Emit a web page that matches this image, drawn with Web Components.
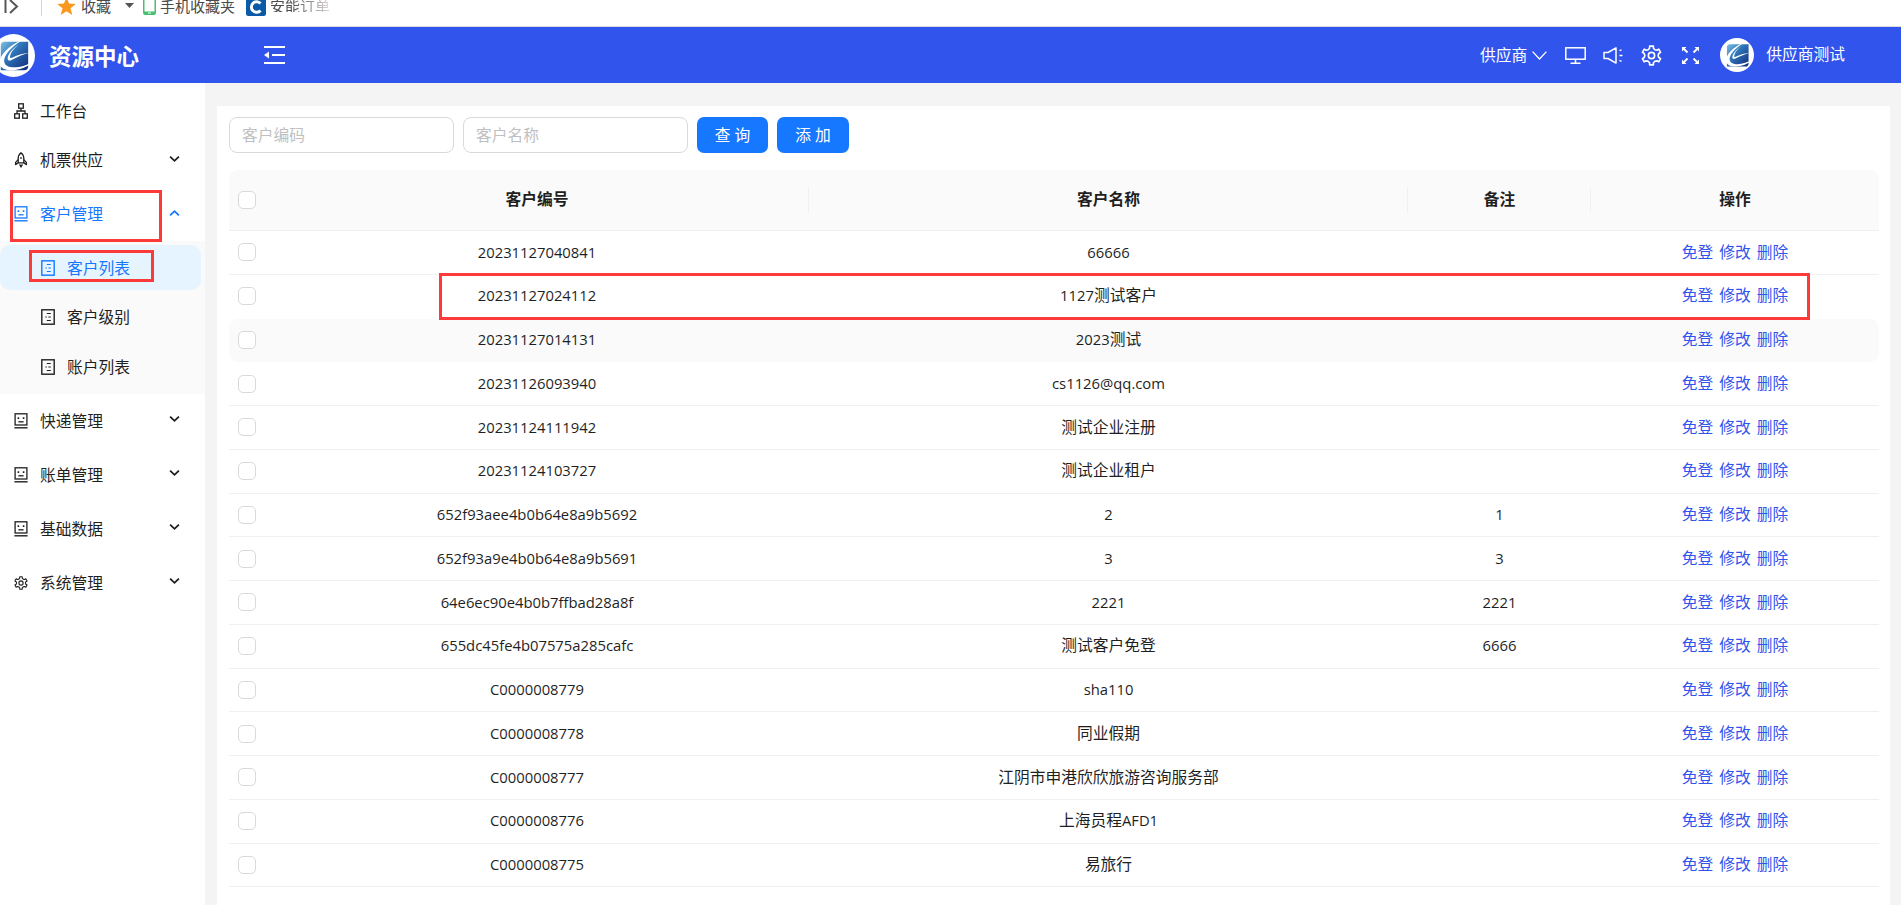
<!DOCTYPE html>
<html lang="zh-CN">
<head>
<meta charset="utf-8">
<title>资源中心</title>
<style>
  html, body { margin: 0; height: 100%; overflow: hidden; background: #f4f4f4; }
  body { font-family: "Noto Sans CJK SC", "Open Sans", sans-serif; font-size: 15.75px; color: #1f1f1f; }
  menu-item[first] { margin-bottom: 4px; }
  menu-item[tight] { margin-bottom: 4.5px; }
  menu-item[sub]:last-child { margin-bottom: 0; }
</style>
</head>
<body>
<app-shell>
  <browser-strip slot="strip"></browser-strip>
  <app-header slot="header"></app-header>
  <side-menu slot="side">
    <menu-item first icon="apartment">工作台</menu-item>
    <menu-item icon="rocket" arrow="down">机票供应</menu-item>
    <menu-item tight icon="face" arrow="up" active>客户管理</menu-item>
    <menu-group>
      <menu-item sub tight icon="list" current>客户列表</menu-item>
      <menu-item sub tight icon="list">客户级别</menu-item>
      <menu-item sub icon="list">账户列表</menu-item>
    </menu-group>
    <menu-item icon="face" arrow="down">快递管理</menu-item>
    <menu-item icon="face" arrow="down">账单管理</menu-item>
    <menu-item icon="face" arrow="down">基础数据</menu-item>
    <menu-item icon="gear" arrow="down">系统管理</menu-item>
  </side-menu>
  <list-card slot="main">
    <filter-bar></filter-bar>
    <data-table></data-table>
  </list-card>
  <red-mark style="left:10px;top:190px;width:152px;height:52px"></red-mark>
  <red-mark style="left:29px;top:250px;width:125px;height:32px"></red-mark>
  <red-mark style="left:439px;top:273px;width:1371px;height:47px"></red-mark>
</app-shell>

<script>
// gear with six lobes, same shape as the reference
function gearPath() {
  let d = '';
  for (let i = 0; i < 6; i++) {
    const a = i * 60 - 90;
    [[-30, 7.6], [-15, 8.6], [-11, 11], [11, 11], [15, 8.6]].forEach(([o, r]) => {
      const t = (a + o) * Math.PI / 180;
      const x = (12 + r * Math.cos(t)).toFixed(2);
      const y = (12 + r * Math.sin(t)).toFixed(2);
      d += (d ? 'L' : 'M') + x + ' ' + y;
    });
  }
  return d + 'Z';
}

function logoSvg(id) {
  return `<svg viewBox="0 0 44 44"><defs><linearGradient id="${id}" x1="0" y1="0" x2="1" y2="1"><stop offset="0" stop-color="#7fc0e2"/><stop offset=".4" stop-color="#2f78bb"/><stop offset="1" stop-color="#14297a"/></linearGradient></defs><circle cx="22" cy="22" r="22" fill="#fff"/><path d="M9 12Q9 8 13 8H37V33Q37 37 33 37H9Z" fill="url(#${id})"/><path d="M33 5C22 9 10 18 8 27c-1 6 3 10 11 10 8 0 18-3 25-10-8 5-17 7.500-23 7-6-.5-9-3-8.500-8C13.500 19 24 10 33 5z" fill="#fff"/><path d="M27 11C21 15 16 21 16 25c0 2.500 2 2.500 4 1.500 6-3 13-6 19-7.500-6 .5-13 2.500-18 5-2 1-3 .5-2.500-1.500 1-4 4-8 8.500-11.500z" fill="#fff"/></svg>`;
}

const ICONS = {
  apartment: `<svg viewBox="0 0 14 16" fill="none" stroke="currentColor" stroke-width="1.3"><rect x="4.7" y=".8" width="4.6" height="4.4"/><rect x=".7" y="10.8" width="4.6" height="4.4"/><rect x="8.7" y="10.8" width="4.6" height="4.4"/><path d="M7 5.200V8M3 10.800V8h8v2.800"/></svg>`,
  rocket: `<svg viewBox="0 0 14 16" fill="none" stroke="currentColor" stroke-width="1.3" stroke-linejoin="round"><path d="M7 .8C5 2.400 4.200 4.600 4.200 6.600v4.200h5.600V6.600C9.800 4.600 9 2.400 7 .8z"/><path d="M4.200 7.600 1.600 10.400v2.200l2.600-1.800M9.800 7.600l2.600 2.800v2.200l-2.600-1.800M5.600 12.400 7 15l1.400-2.600"/><path d="M6.200 6h1.600" stroke-width="1.400"/></svg>`,
  face: `<svg viewBox="0 0 14 16" fill="none" stroke="currentColor" stroke-width="1.3"><rect x="1.100" y=".8" width="11.800" height="11.200"/><path d="M.4 14.800h13.200" stroke-width="1.400"/><path d="M4.400 4.200v1.800M9.600 4.200v1.800" stroke-width="1.600"/><path d="M4.400 8.800h5.200"/></svg>`,
  list: `<svg viewBox="0 0 14 16" fill="none" stroke="currentColor" stroke-width="1.400"><rect x=".8" y=".8" width="12.400" height="14.400"/><path d="M5.800 4.500h4M7.400 8h2.400M5.800 11.500h4" stroke-width="1.200"/><path d="M4.400 8h1.400" stroke-width="1.200"/></svg>`,
  gear: `<svg viewBox="0 0 24 24" fill="none" stroke="currentColor" stroke-width="1.900" stroke-linejoin="round"><path d="${gearPath()}"/><circle cx="12" cy="12" r="3.600"/></svg>`,
  chevron: `<svg viewBox="0 0 12 8" fill="none" stroke="currentColor" stroke-width="2"><path d="M1.200 1.400 6 6l4.800-4.600"/></svg>`
};

class AppShell extends HTMLElement {
  connectedCallback() {
    this.attachShadow({ mode: 'open' });
    this.shadowRoot.innerHTML = `
      <style>
        :host { display: grid; grid-template-columns: 205px 1fr; grid-template-rows: 27px 56px 1fr; height: 905px; position: relative; }
        ::slotted([slot="strip"]), ::slotted([slot="header"]) { grid-column: 1 / 3; }
      </style>
      <slot name="strip"></slot>
      <slot name="header"></slot>
      <slot name="side"></slot>
      <slot name="main"></slot>
      <slot></slot>
    `;
  }
}

class BrowserStrip extends HTMLElement {
  connectedCallback() {
    this.attachShadow({ mode: 'open' });
    this.shadowRoot.innerHTML = `
      <style>
        :host { display: flex; align-items: flex-start; height: 26px; background: #fff; border-bottom: 1px solid #dcdcdc; overflow: hidden; color: #4a4a4a; font-size: 15px; position: relative; }
        svg { flex: none; display: block; }
        span { line-height: 12px; white-space: nowrap; }
        .fade { background: linear-gradient(90deg, #4a4a4a 35%, #e4dcdc 100%); -webkit-background-clip: text; background-clip: text; color: transparent; }
      </style>
      <svg style="margin-left:4px" width="15" height="14" viewBox="0 0 15 14" fill="none" stroke="#555" stroke-width="2"><path d="M1.500 0v13"/><path d="M6 0l7 6.500L6 13"/></svg>
      <svg style="margin-left:22px" width="1" height="16"><rect width="1" height="16" fill="#d4d4d4"/></svg>
      <svg style="margin-left:15px" width="19" height="15" viewBox="0 0 19 15"><path d="M9.500-3 12 3.600 18.800 4 13.500 8.200 15.300 15 9.500 11.200 3.700 15 5.500 8.200.2 4 7 3.600z" fill="#f8981d"/></svg>
      <span style="margin-left:5px;width:31px">收藏</span>
      <svg style="margin-left:13px;margin-top:3px" width="9" height="5" viewBox="0 0 9 5"><path d="M0 0h9L4.500 5z" fill="#555"/></svg>
      <svg style="margin-left:9px" width="13" height="15" viewBox="0 0 13 15"><path d="M0-1h13v13q0 3-2 3H2q-2 0-2-3z" fill="#45c070"/><rect x="1.500" y="-1" width="10" height="12.500" fill="#fff"/><rect x="5" y="12.500" width="3" height="1" fill="#fff"/></svg>
      <span style="margin-left:4px">手机收藏夹</span>
      <svg style="margin-left:11px" width="20" height="16" viewBox="0 0 20 16"><rect y="-4" width="20" height="20" rx="2.500" fill="#0b5aa8"/><path d="M14.500 3.600A5.200 5.200 0 1 0 14.500 10.400" fill="none" stroke="#fff" stroke-width="3"/></svg>
      <span class="fade" style="margin-left:4px">安能订单</span>
    `;
  }
}

class AppHeader extends HTMLElement {
  connectedCallback() {
    this.attachShadow({ mode: 'open' });
    this.shadowRoot.innerHTML = `
      <style>
        :host { display: flex; align-items: center; height: 56px; background: #3155ec; color: #fff; overflow: hidden; }
        svg { display: block; flex: none; }
        .logo { width: 43px; height: 43px; margin-left: -8px; }
        .title { margin-left: 14px; font-size: 22.5px; font-weight: 700; line-height: 1; white-space: nowrap; }
        .collapse { margin-left: 125px; }
        .right { margin-left: auto; margin-right: 56px; display: flex; align-items: center; }
        .role { line-height: 1; }
        .right .mini { width: 34px; height: 34px; margin-left: 21px; }
        .who { margin-left: 12px; line-height: 1; font-size: 15.75px; margin-top: -3px; }
      </style>
      <div class="logo">${logoSvg('lg1')}</div>
      <div class="title">资源中心</div>
      <svg class="collapse" width="21" height="18" viewBox="0 0 21 18" fill="none" stroke="#fff" stroke-width="2"><path d="M0 1h21M8 9h13M0 17h21"/><path d="M5 5.500v7L0 9z" fill="#fff" stroke="none"/></svg>
      <div class="right">
        <span class="role">供应商</span>
        <svg style="margin-left:5px" width="15" height="9" viewBox="0 0 15 9" fill="none" stroke="#fff" stroke-width="1.300"><path d="M.6.600 7.500 8 14.400.6"/></svg>
        <svg style="margin-left:18px" width="21" height="17" viewBox="0 0 21 17" fill="none" stroke="#fff" stroke-width="1.500"><rect x=".8" y=".8" width="19.400" height="11.400"/><path d="M10.500 12.200v3.800M5.500 16.200h10"/></svg>
        <svg style="margin-left:17px" width="20" height="17" viewBox="0 0 20 17" fill="none" stroke="#fff" stroke-width="1.500" stroke-linejoin="round"><path d="M1 5.500h4L13 .9v15.200L5 11.500H1z"/><path d="M16.500 3.600 18.500 2.800M16.500 8.500h3M16.500 13.400l2 .9" stroke-width="1.400"/></svg>
        <div style="margin-left:18px;width:21px;height:21px">${ICONS.gear}</div>
        <svg style="margin-left:20px" width="17" height="17" viewBox="0 0 17 17" fill="none" stroke="#fff" stroke-width="1.800"><path d="M1 1l4.500 4.500M16 1l-4.500 4.500M1 16l4.500-4.500M16 16l-4.500-4.500"/><path d="M0 0h4.500L0 4.500zM17 0v4.500L12.500 0zM0 17v-4.500L4.500 17zM17 17h-4.500L17 12.500z" fill="#fff" stroke="none"/></svg>
        <div class="mini">${logoSvg('lg2')}</div>
        <span class="who">供应商测试</span>
      </div>
    `;
  }
}

class SideMenu extends HTMLElement {
  connectedCallback() {
    this.attachShadow({ mode: 'open' });
    this.shadowRoot.innerHTML = `
      <style>
        :host { display: flex; flex-direction: column; background: #fff; padding-top: 5.5px; box-sizing: border-box; min-height: 0; }
      </style>
      <slot></slot>
    `;
  }
}

class MenuGroup extends HTMLElement {
  connectedCallback() {
    this.attachShadow({ mode: 'open' });
    this.shadowRoot.innerHTML = `
      <style>
        :host { display: flex; flex-direction: column; background: #fafafa; padding: 4px 0 4.5px; margin-bottom: 4.5px; }
      </style>
      <slot></slot>
    `;
  }
}

class MenuItem extends HTMLElement {
  connectedCallback() {
    const arrow = this.getAttribute('arrow');
    this.attachShadow({ mode: 'open' });
    this.shadowRoot.innerHTML = `
      <style>
        :host { display: flex; align-items: center; height: 45px; margin-bottom: 9px; padding: 0 25px 0 14px; font-size: 15.75px; color: #1f1f1f; flex: none; }
        :host([active]) { color: #1677ff; }
        :host([sub]) { padding-left: 41px; width: 201px; box-sizing: border-box; border-radius: 10px; }
        :host([current]) { background: #e6f4ff; color: #1677ff; }
        .ico { width: 14px; height: 16px; margin-right: 12px; flex: none; display: flex; align-items: center; }
        .ico svg { display: block; width: 14px; height: 16px; overflow: visible; }
        .lab { flex: 1; line-height: 1; }
        .arr { width: 11px; height: 8px; flex: none; margin-top: -3px; }
        .arr svg { display: block; width: 11px; height: 8px; }
        .arr.up svg { transform: rotate(180deg); }
      </style>
      <span class="ico">${ICONS[this.getAttribute('icon')]}</span>
      <span class="lab"><slot></slot></span>
      ${arrow ? `<span class="arr ${arrow}">${ICONS.chevron}</span>` : ''}
    `;
  }
}

class ListCard extends HTMLElement {
  connectedCallback() {
    this.attachShadow({ mode: 'open' });
    this.shadowRoot.innerHTML = `
      <style>
        :host { display: block; background: #fff; margin: 23px 11px 0 12px; padding: 11px 11px 0 12px; }
      </style>
      <slot></slot>
    `;
  }
}

class FilterBar extends HTMLElement {
  connectedCallback() {
    this.attachShadow({ mode: 'open' });
    this.shadowRoot.innerHTML = `
      <style>
        :host { display: flex; gap: 9px; height: 36px; margin-bottom: 17px; }
        .in { width: 225px; box-sizing: border-box; border: 1px solid #d9d9d9; border-radius: 8px; padding: 0 0 2px 12px; color: #bfbfbf; display: flex; align-items: center; font-size: 15.75px; }
        .btn { height: 36px; box-sizing: border-box; border-radius: 7px; background: #1677ff; color: #fff; display: flex; align-items: center; justify-content: center; padding-bottom: 2px; font-size: 15.75px; letter-spacing: 4px; text-indent: 4px; }
      </style>
      <div class="in">客户编码</div>
      <div class="in">客户名称</div>
      <div class="btn" style="width:71px">查询</div>
      <div class="btn" style="width:72px">添加</div>
    `;
  }
}

const COLUMNS = '36px 544px 599px 183px 288px';

const ROWS = [
  ['20231127040841', '66666', ''],
  ['20231127024112', '1127测试客户', ''],
  ['20231127014131', '2023测试', ''],
  ['20231126093940', 'cs1126@qq.com', ''],
  ['20231124111942', '测试企业注册', ''],
  ['20231124103727', '测试企业租户', ''],
  ['652f93aee4b0b64e8a9b5692', '2', '1'],
  ['652f93a9e4b0b64e8a9b5691', '3', '3'],
  ['64e6ec90e4b0b7ffbad28a8f', '2221', '2221'],
  ['655dc45fe4b07575a285cafc', '测试客户免登', '6666'],
  ['C0000008779', 'sha110', ''],
  ['C0000008778', '同业假期', ''],
  ['C0000008777', '江阴市申港欣欣旅游咨询服务部', ''],
  ['C0000008776', '上海员程AFD1', ''],
  ['C0000008775', '易旅行', '']
];

// latin and digits run a little narrower than the chinese text
function markLatin(s) {
  return s.replace(/[\x20-\x7e]+/g, m => `<span class="lat">${m}</span>`);
}

class DataTable extends HTMLElement {
  connectedCallback() {
    this.attachShadow({ mode: 'open' });
    this.shadowRoot.innerHTML = `
      <style>
        :host { display: block; font-size: 15.75px; color: #1f1f1f; }
        .head, .row { display: grid; grid-template-columns: ${COLUMNS}; align-items: center; box-sizing: border-box; text-align: center; }
        .head { height: 61px; background: #fafafa; border-radius: 9px 9px 0 0; border-bottom: 1px solid #f0f0f0; font-weight: 600; }
        .head > div, .row > div { line-height: 24px; }
        .head > div:not(:first-child) { margin-top: -2px; }
        .row > div:not(:first-child) { margin-top: -1.5px; }
        .head > div { position: relative; }
        .head > div.sep::after { content: ""; position: absolute; right: 0; top: 50%; width: 1px; height: 26px; margin-top: -12px; background: #f0f0f0; }
        .row { height: 43.75px; border-bottom: 1px solid #f0f0f0; }
        .row.hover { background: #fafafa; border-radius: 9px; border-bottom-color: transparent; }
        .row.before { border-bottom-color: transparent; }
        .cb { width: 18px; height: 18px; box-sizing: border-box; border: 1px solid #d9d9d9; border-radius: 5px; background: #fff; margin-left: 9px; }
        .lat { font-family: "Open Sans", sans-serif; font-size: 14.8px; }
        .ops { display: flex; justify-content: center; gap: 6px; color: #3155ec; }
      </style>
      <div class="head">
        <div><div class="cb"></div></div>
        <div class="sep">客户编号</div>
        <div class="sep">客户名称</div>
        <div class="sep">备注</div>
        <div>操作</div>
      </div>
      ${ROWS.map((r, i) => `
        <div class="row${i === 2 ? ' hover' : ''}${i === 1 ? ' before' : ''}">
          <div><div class="cb"></div></div>
          <div>${markLatin(r[0])}</div>
          <div>${markLatin(r[1])}</div>
          <div>${markLatin(r[2])}</div>
          <div class="ops"><span>免登</span><span>修改</span><span>删除</span></div>
        </div>`).join('')}
    `;
  }
}

class RedMark extends HTMLElement {
  connectedCallback() {
    this.attachShadow({ mode: 'open' });
    this.shadowRoot.innerHTML = `
      <style>
        :host { display: block; position: absolute; box-sizing: border-box; border: 3px solid #fc3a3a; pointer-events: none; }
      </style>
    `;
  }
}

customElements.define('app-shell', AppShell);
customElements.define('browser-strip', BrowserStrip);
customElements.define('app-header', AppHeader);
customElements.define('side-menu', SideMenu);
customElements.define('menu-group', MenuGroup);
customElements.define('menu-item', MenuItem);
customElements.define('list-card', ListCard);
customElements.define('filter-bar', FilterBar);
customElements.define('data-table', DataTable);
customElements.define('red-mark', RedMark);
</script>
</body>
</html>
